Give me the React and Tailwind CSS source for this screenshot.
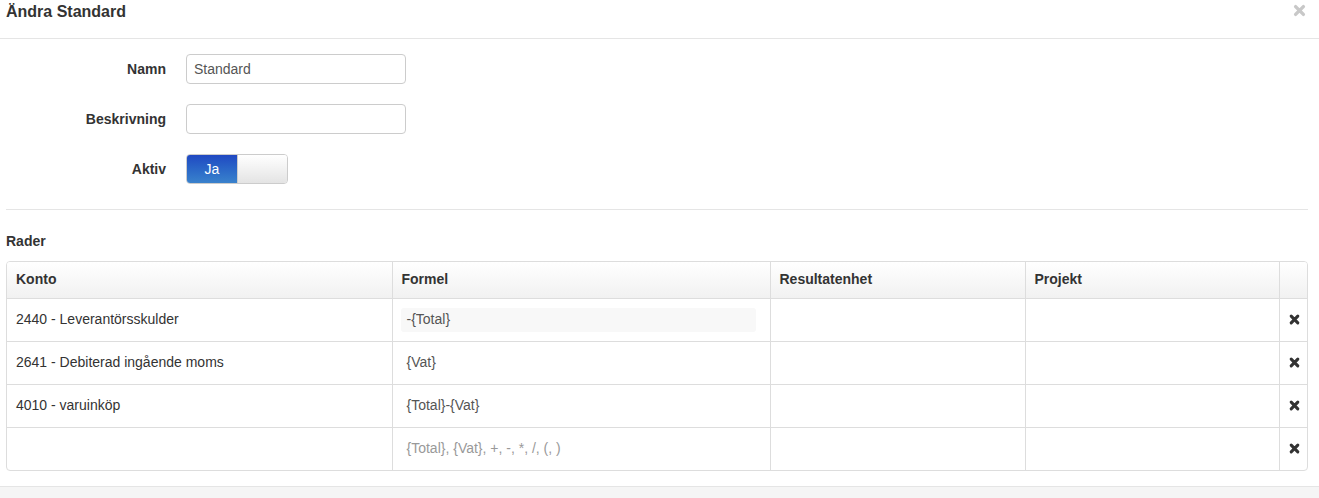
import { useState } from "react";

const rows = [
  { konto: "2440 - Leverantörsskulder", formel: "-{Total}", active: true },
  { konto: "2641 - Debiterad ingående moms", formel: "{Vat}" },
  { konto: "4010 - varuinköp", formel: "{Total}-{Vat}" },
  { konto: "", formel: "", placeholder: "{Total}, {Vat}, +, -, *, /, (, )" },
];

// thick "times" cross, like the icon font one
const TimesIcon = ({ size = 10, weight = 3 }) => (
  <svg viewBox="0 0 10 10" width={size} height={size} fill="none" stroke="currentColor" strokeWidth={weight} strokeLinecap="round">
    <path d="M2 2 8 8M8 2 2 8" />
  </svg>
);

const FieldRow = ({ label, children }) => (
  <div className="flex items-center h-[30px]">
    <label className="w-[166px] text-right text-[14px] font-bold text-[#333]">{label}</label>
    <div className="ml-[20px]">{children}</div>
  </div>
);

export default function App() {
  const [namn, setNamn] = useState("Standard");
  const [beskrivning, setBeskrivning] = useState("");
  const [aktiv, setAktiv] = useState(true);

  return (
    <div className="w-[1319px] h-[498px] bg-white overflow-hidden font-['Liberation_Sans',Arial,sans-serif] text-[#333]">
      {/* Header */}
      <div className="flex items-center justify-between h-[39px] border-b border-[#e5e5e5] pl-[6px] pr-[13px]">
        <h4 className="text-[16px] font-bold text-[#333] -mt-[14px] leading-none">Ändra Standard</h4>
        <button className="text-[#c8c8c8] -mt-[17px]">
          <TimesIcon size={13} weight={2.6} />
        </button>
      </div>

      {/* Body */}
      <div className="px-[6px] pt-[15px]">
        <div className="flex flex-col gap-[20px] -ml-[6px]">
          <FieldRow label="Namn">
            <input
              value={namn}
              onChange={(e) => setNamn(e.target.value)}
              className="w-[220px] h-[30px] px-[7px] border border-[#ccc] rounded-[4px] text-[14px] text-[#555] outline-none"
            />
          </FieldRow>
          <FieldRow label="Beskrivning">
            <input
              value={beskrivning}
              onChange={(e) => setBeskrivning(e.target.value)}
              className="w-[220px] h-[30px] px-[7px] border border-[#ccc] rounded-[4px] text-[14px] text-[#555] outline-none"
            />
          </FieldRow>
          <FieldRow label="Aktiv">
            <button
              onClick={() => setAktiv(!aktiv)}
              className="flex w-[102px] h-[30px] border border-[#ccc] rounded-[4px] overflow-hidden"
            >
              <span className="w-[50px] h-full flex items-center justify-center text-[14px] text-white bg-gradient-to-b from-[#2148c2] to-[#3a82cc]">
                Ja
              </span>
              <span className="flex-1 h-full bg-gradient-to-b from-white to-[#e4e4e4] border-l border-[#ccc]"></span>
            </button>
          </FieldRow>
        </div>

        <div className="mt-[25px] border-t border-[#e5e5e5] w-[1302px]"></div>

        <div className="mt-[24px] text-[14px] font-bold text-[#333] leading-none">Rader</div>

        {/* Table */}
        <div className="mt-[13px] w-[1302px] border border-[#ddd] rounded-[4px] overflow-hidden">
          <table className="w-full table-fixed border-collapse text-[14px]">
            <colgroup>
              <col className="w-[385px]" />
              <col className="w-[378px]" />
              <col className="w-[255px]" />
              <col className="w-[254px]" />
              <col />
            </colgroup>
            <thead>
              <tr className="h-[36px] bg-gradient-to-b from-white to-[#f1f1f1]">
                <th className="text-left font-bold px-[9px]">Konto</th>
                <th className="text-left font-bold px-[9px] border-l border-[#ddd]">Formel</th>
                <th className="text-left font-bold px-[9px] border-l border-[#ddd]">Resultatenhet</th>
                <th className="text-left font-bold px-[9px] border-l border-[#ddd]">Projekt</th>
                <th className="border-l border-[#ddd]"></th>
              </tr>
            </thead>
            <tbody>
              {rows.map((row, i) => (
                <tr key={i} className="h-[43px] border-t border-[#ddd]">
                  <td className="px-[9px] text-[#333]">{row.konto}</td>
                  <td className="px-[8px] border-l border-[#ddd]">
                    {row.active ? (
                      <div className="w-[355px] h-[24px] bg-[#f8f8f8] rounded-[3px] flex items-center px-[6px] text-[#555]">
                        {row.formel}
                      </div>
                    ) : row.placeholder ? (
                      <span className="px-[6px] text-[#999]">{row.placeholder}</span>
                    ) : (
                      <span className="px-[6px] text-[#555]">{row.formel}</span>
                    )}
                  </td>
                  <td className="border-l border-[#ddd]"></td>
                  <td className="border-l border-[#ddd]"></td>
                  <td className="border-l border-[#ddd] text-[#333]">
                    <div className="flex justify-center pl-[2px]">
                      <TimesIcon size={11} weight={2.8} />
                    </div>
                  </td>
                </tr>
              ))}
            </tbody>
          </table>
        </div>
      </div>

      {/* Footer */}
      <div className="mt-[15px] border-t border-[#e5e5e5] bg-[#f5f5f5] h-[20px]"></div>
    </div>
  );
}
